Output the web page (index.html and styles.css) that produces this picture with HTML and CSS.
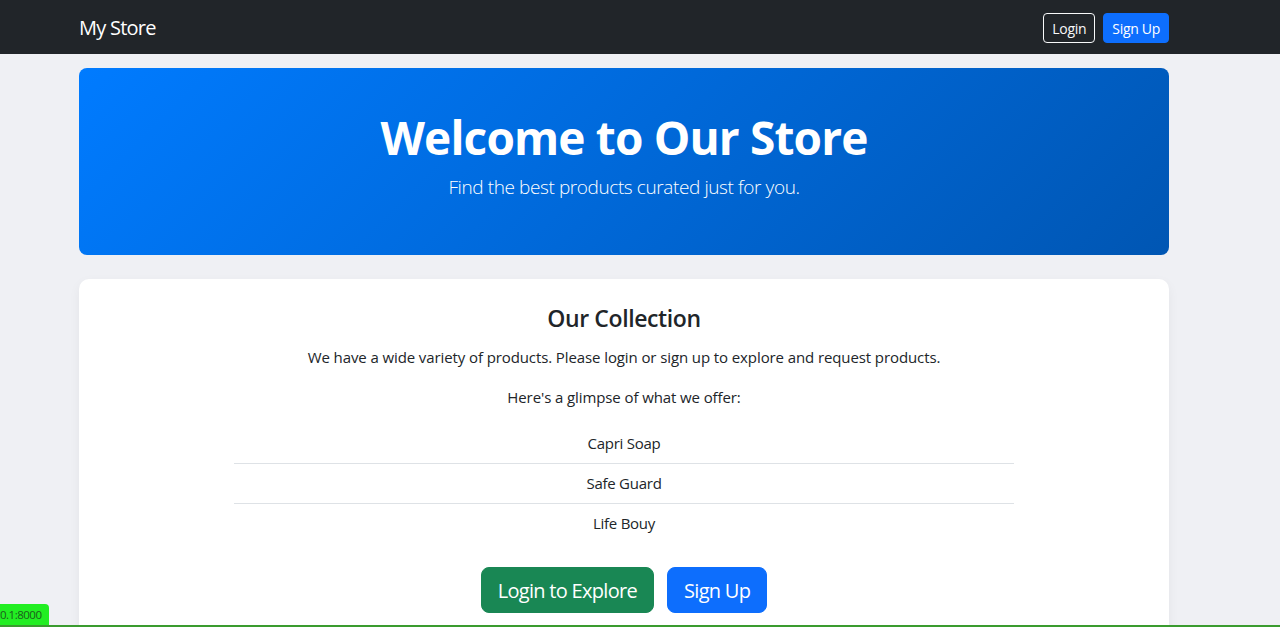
FILE: index.html
```html
<!DOCTYPE html>
<html lang="en">
<head>
<meta charset="utf-8">
<title>My Store</title>
<link rel="stylesheet" href="styles.css">
</head>
<body>
<nav class="navbar">
  <div class="wrap">
    <div class="container nav-inner">
      <a class="brand" href="#">My Store</a>
      <div class="nav-actions">
        <a class="btn btn-sm btn-outline-light" href="#">Login</a>
        <a class="btn btn-sm btn-primary" href="#">Sign Up</a>
      </div>
    </div>
  </div>
</nav>
<main class="wrap">
  <div class="container">
    <section class="hero">
      <h1 class="hero-title">Welcome to Our Store</h1>
      <p class="hero-sub">Find the best products curated just for you.</p>
    </section>
    <section class="card">
      <h3 class="card-title">Our Collection</h3>
      <p class="card-text">We have a wide variety of products. Please login or sign up to explore and request products.</p>
      <p class="card-text card-text-last">Here's a glimpse of what we offer:</p>
      <ul class="list">
        <li class="list-item">Capri Soap</li>
        <li class="list-item">Safe Guard</li>
        <li class="list-item">Life Bouy</li>
      </ul>
      <div class="cta">
        <a class="btn btn-lg btn-success" href="#">Login to Explore</a>
        <a class="btn btn-lg btn-primary" href="#">Sign Up</a>
      </div>
    </section>
  </div>
</main>
<div class="status-tag">0.1:8000</div>
<div class="status-line"></div>
</body>
</html>
```
FILE: styles.css
```css
* { box-sizing: border-box; }
html, body { margin: 0; padding: 0; }
body {
  font-family: "Open Sans", "Noto Sans", "Liberation Sans", sans-serif;
  background: #eff0f4;
  color: #212529;
  height: 627px;
  overflow: hidden;
}
.wrap { width: 1248px; }
.container { width: 1090px; margin: 0 auto; }
.navbar { background: #212529; height: 54px; }
.nav-inner {
  height: 54px;
  padding-top: 2px;
  display: flex;
  align-items: center;
  justify-content: space-between;
}
.brand {
  color: #fff;
  text-decoration: none;
  font-size: 20px;
  letter-spacing: -0.75px;
  line-height: 1;
}
.nav-actions { display: flex; gap: 8px; }
.btn {
  display: inline-flex;
  align-items: center;
  justify-content: center;
  text-decoration: none;
  border: 1px solid transparent;
  color: #fff;
}
.btn-sm {
  font-size: 14px;
  height: 30px;
  padding: 0 8px;
  border-radius: 4px;
  letter-spacing: -0.3px;
}
.btn-outline-light { border-color: #f8f9fa; color: #f8f9fa; }
.btn-primary { background: #0d6efd; border-color: #0d6efd; }
.btn-success { background: #198754; border-color: #198754; }
.btn-lg {
  font-size: 20px;
  height: 46px;
  padding: 0 16px;
  border-radius: 8px;
  letter-spacing: -0.7px;
}
.hero {
  margin-top: 14px;
  height: 187px;
  border-radius: 8px;
  background: linear-gradient(135deg, #007bff 0%, #0056b3 100%);
  color: #fff;
  text-align: center;
  padding-top: 40px;
}
.hero-title {
  margin: 0;
  font-size: 46px;
  font-weight: 700;
  line-height: 58px;
  letter-spacing: -0.85px;
}
.hero-sub {
  margin: 6px 0 0;
  font-size: 19px;
  font-weight: 300;
  line-height: 30px;
  letter-spacing: -0.4px;
}
.card {
  margin-top: 24px;
  background: #fff;
  border-radius: 10px;
  box-shadow: 0 4px 12px rgba(0,0,0,0.05);
  padding: 24px 0 40px;
  text-align: center;
  min-height: 400px;
}
.card-title {
  margin: 0 0 12px;
  font-size: 23px;
  font-weight: 600;
  line-height: 30px;
  letter-spacing: -0.4px;
}
.card-text {
  margin: 0 0 16px;
  font-size: 15px;
  line-height: 24px;
  letter-spacing: -0.1px;
}
.card-text-last { margin-bottom: 15px; }
.list {
  list-style: none;
  margin: 0 auto 24px;
  padding: 0;
  width: 780px;
}
.list-item {
  font-size: 15px;
  line-height: 23px;
  padding: 8px 16px;
  letter-spacing: -0.25px;
  border-bottom: 1px solid #dee2e6;
}
.list-item:last-child { border-bottom: 0; }
.cta { display: flex; justify-content: center; gap: 13px; }
.status-tag {
  position: fixed;
  left: 0;
  bottom: 2px;
  height: 21px;
  width: 49px;
  background: #22ee22;
  color: #1c5c1c;
  font-size: 11.5px;
  line-height: 21px;
  letter-spacing: -0.5px;
  border-top-right-radius: 4px;
  white-space: nowrap;
}
.status-line {
  position: fixed;
  left: 0;
  right: 0;
  bottom: 0;
  height: 2px;
  background: #3a9b2f;
}
```
